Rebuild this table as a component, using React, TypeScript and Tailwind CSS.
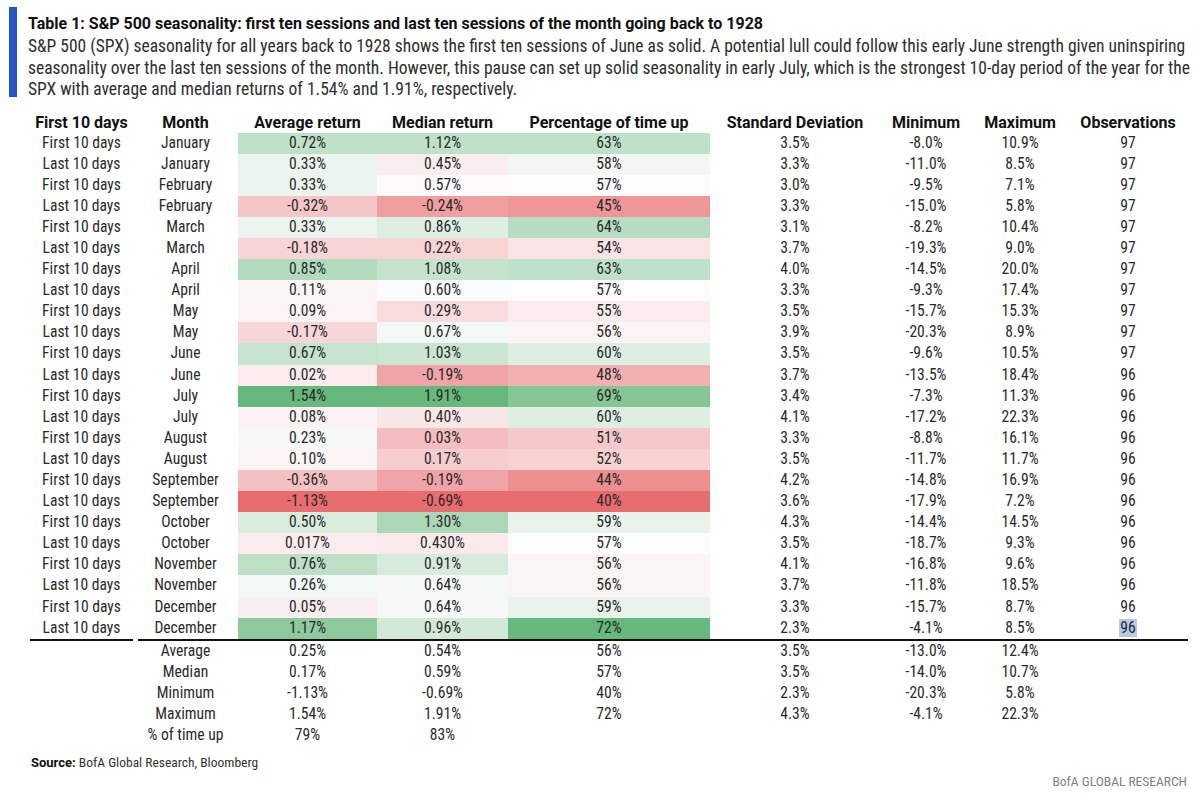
type Row = [string, string, string, string, string, string, string, string, string];

const rows: Row[] = [
  ["First 10 days", "January", "0.72%", "1.12%", "63%", "3.5%", "-8.0%", "10.9%", "97"],
  ["Last 10 days", "January", "0.33%", "0.45%", "58%", "3.3%", "-11.0%", "8.5%", "97"],
  ["First 10 days", "February", "0.33%", "0.57%", "57%", "3.0%", "-9.5%", "7.1%", "97"],
  ["Last 10 days", "February", "-0.32%", "-0.24%", "45%", "3.3%", "-15.0%", "5.8%", "97"],
  ["First 10 days", "March", "0.33%", "0.86%", "64%", "3.1%", "-8.2%", "10.4%", "97"],
  ["Last 10 days", "March", "-0.18%", "0.22%", "54%", "3.7%", "-19.3%", "9.0%", "97"],
  ["First 10 days", "April", "0.85%", "1.08%", "63%", "4.0%", "-14.5%", "20.0%", "97"],
  ["Last 10 days", "April", "0.11%", "0.60%", "57%", "3.3%", "-9.3%", "17.4%", "97"],
  ["First 10 days", "May", "0.09%", "0.29%", "55%", "3.5%", "-15.7%", "15.3%", "97"],
  ["Last 10 days", "May", "-0.17%", "0.67%", "56%", "3.9%", "-20.3%", "8.9%", "97"],
  ["First 10 days", "June", "0.67%", "1.03%", "60%", "3.5%", "-9.6%", "10.5%", "97"],
  ["Last 10 days", "June", "0.02%", "-0.19%", "48%", "3.7%", "-13.5%", "18.4%", "96"],
  ["First 10 days", "July", "1.54%", "1.91%", "69%", "3.4%", "-7.3%", "11.3%", "96"],
  ["Last 10 days", "July", "0.08%", "0.40%", "60%", "4.1%", "-17.2%", "22.3%", "96"],
  ["First 10 days", "August", "0.23%", "0.03%", "51%", "3.3%", "-8.8%", "16.1%", "96"],
  ["Last 10 days", "August", "0.10%", "0.17%", "52%", "3.5%", "-11.7%", "11.7%", "96"],
  ["First 10 days", "September", "-0.36%", "-0.19%", "44%", "4.2%", "-14.8%", "16.9%", "96"],
  ["Last 10 days", "September", "-1.13%", "-0.69%", "40%", "3.6%", "-17.9%", "7.2%", "96"],
  ["First 10 days", "October", "0.50%", "1.30%", "59%", "4.3%", "-14.4%", "14.5%", "96"],
  ["Last 10 days", "October", "0.017%", "0.430%", "57%", "3.5%", "-18.7%", "9.3%", "96"],
  ["First 10 days", "November", "0.76%", "0.91%", "56%", "4.1%", "-16.8%", "9.6%", "96"],
  ["Last 10 days", "November", "0.26%", "0.64%", "56%", "3.7%", "-11.8%", "18.5%", "96"],
  ["First 10 days", "December", "0.05%", "0.64%", "59%", "3.3%", "-15.7%", "8.7%", "96"],
  ["Last 10 days", "December", "1.17%", "0.96%", "72%", "2.3%", "-4.1%", "8.5%", "96"],
];

const summary: string[][] = [
  ["Average", "0.25%", "0.54%", "56%", "3.5%", "-13.0%", "12.4%"],
  ["Median", "0.17%", "0.59%", "57%", "3.5%", "-14.0%", "10.7%"],
  ["Minimum", "-1.13%", "-0.69%", "40%", "2.3%", "-20.3%", "5.8%"],
  ["Maximum", "1.54%", "1.91%", "72%", "4.3%", "-4.1%", "22.3%"],
  ["% of time up", "79%", "83%", "", "", "", ""],
];

const headers = [
  "First 10 days",
  "Month",
  "Average return",
  "Median return",
  "Percentage of time up",
  "Standard Deviation",
  "Minimum",
  "Maximum",
  "Observations",
];

const grid =
  "grid grid-cols-[103px_105px_139px_131px_202px_170px_92px_96px_120px]";

const RED = [233, 108, 111];
const WHITE = [252, 252, 253];
const GREEN = [103, 184, 124];

const num = (s: string) => parseFloat(s.replace("%", ""));

// excel-style 3 colour scale: min red, 50th percentile white, max green
const scale = (col: number) => {
  const vals = rows.map((r) => num(r[col])).sort((a, b) => a - b);
  const n = vals.length;
  const pos = (n - 1) * 0.5;
  const lo = Math.floor(pos);
  const mid = vals[lo] + (vals[Math.ceil(pos)] - vals[lo]) * (pos - lo);
  const min = vals[0];
  const max = vals[n - 1];
  return (v: number) => {
    const [to, t] = v >= mid ? [GREEN, (v - mid) / (max - mid)] : [RED, (mid - v) / (mid - min)];
    const c = WHITE.map((w, i) => Math.round(w + (to[i] - w) * t));
    return `rgb(${c[0]},${c[1]},${c[2]})`;
  };
};

const colourOf: Record<number, (v: number) => string> = { 2: scale(2), 3: scale(3), 4: scale(4) };

export default function App() {
  return (
    <div className="w-[1200px] h-[793px] bg-white text-[#2a2a2a] font-['Roboto_Condensed',Roboto,sans-serif] overflow-hidden">
      <div className="flex pt-[7px] pl-[9px]">
        <div className="w-[8px] h-[90px] bg-[#2356c6] shrink-0" />
        <div className="pl-[11px] pt-[6px]">
          <h1 className="text-[16px] leading-[22px] font-bold text-[#111] font-['Roboto',sans-serif]">
            Table 1: S&amp;P 500 seasonality: first ten sessions and last ten sessions of the month going back to 1928
          </h1>
          <p className="text-[17.5px] leading-[21.5px] text-[#2e2e2e] whitespace-nowrap mt-[1px]">
            <span className="block">
              S&amp;P 500 (SPX) seasonality for all years back to 1928 shows the first ten sessions of June as solid. A potential lull could follow this early June strength given uninspiring
            </span>
            <span className="block">
              seasonality over the last ten sessions of the month. However, this pause can set up solid seasonality in early July, which is the strongest 10-day period of the year for the
            </span>
            <span className="block">SPX with average and median returns of 1.54% and 1.91%, respectively.</span>
          </p>
        </div>
      </div>

      <div className="pl-[30px] mt-[10px]">
        <div className={`${grid} h-[22px] items-center text-[16px] font-bold text-[#111] font-['Roboto',sans-serif]`}>
          {headers.map((h) => (
            <div key={h} className="text-center whitespace-nowrap">
              {h}
            </div>
          ))}
        </div>

        {rows.map((r, ri) => (
          <div key={ri} className={`${grid} h-[21.1px] text-[15.6px] leading-[21.1px]`}>
            {r.map((cell, ci) => (
              <div
                key={ci}
                className="text-center whitespace-nowrap"
                style={colourOf[ci] ? { backgroundColor: colourOf[ci](num(cell)) } : undefined}
              >
                {ri === rows.length - 1 && ci === 8 ? (
                  <span className="bg-[#b7c9e0] text-[#1d2a3a] px-[1px]">{cell}</span>
                ) : (
                  cell
                )}
              </div>
            ))}
          </div>
        ))}

        <div className="flex h-[2px] gap-[5px]">
          <div className="w-[103px] bg-[#111]" />
          <div className="w-[1050px] bg-[#111]" />
        </div>

        {summary.map((s) => (
          <div key={s[0]} className={`${grid} h-[21.1px] text-[15.6px] leading-[21.1px]`}>
            <div />
            {s.map((cell, ci) => (
              <div key={ci} className="text-center whitespace-nowrap">
                {cell}
              </div>
            ))}
            <div />
          </div>
        ))}
      </div>

      <div className="flex items-start justify-between pl-[31px] pr-[13px] mt-[6px]">
        <p className="text-[13.5px] leading-[20px] text-[#333]">
          <span className="font-bold text-[#111] font-['Roboto',sans-serif] text-[13px]">Source:</span> BofA Global Research, Bloomberg
        </p>
        <p className="text-[13.5px] leading-[20px] text-[#808080] mt-[19px]">BofA GLOBAL RESEARCH</p>
      </div>
    </div>
  );
}
